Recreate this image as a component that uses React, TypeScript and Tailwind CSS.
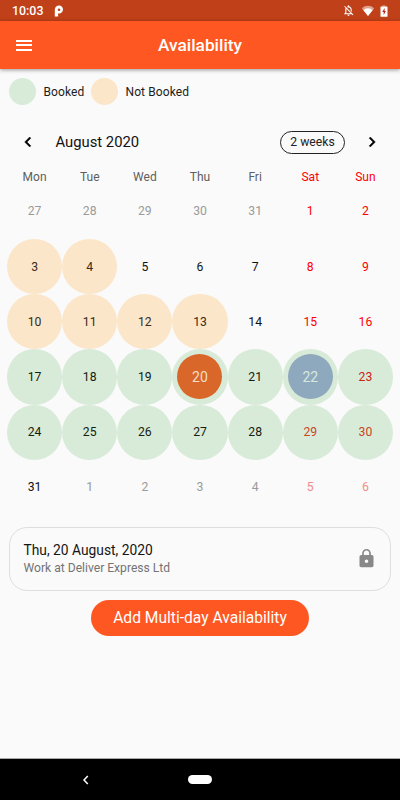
import React from "react";

type Kind = "booked" | "free" | "none";

const weekdays = ["Mon", "Tue", "Wed", "Thu", "Fri", "Sat", "Sun"];

const weeks = [
  [27, 28, 29, 30, 31, 1, 2],
  [3, 4, 5, 6, 7, 8, 9],
  [10, 11, 12, 13, 14, 15, 16],
  [17, 18, 19, 20, 21, 22, 23],
  [24, 25, 26, 27, 28, 29, 30],
  [31, 1, 2, 3, 4, 5, 6],
];

function isOutside(week: number, day: number) {
  return (week === 0 && day > 20) || (week === 5 && day < 10);
}

function getKind(week: number, col: number): Kind {
  if (week === 3 || week === 4) return "booked";
  if ((week === 1 && col < 2) || (week === 2 && col < 4)) return "free";
  return "none";
}

function getColor(week: number, col: number, day: number) {
  const weekend = col > 4;
  if (isOutside(week, day)) return weekend ? "text-[#f28b8b]" : "text-[#9a9a9a]";
  if (weekend) {
    if (week === 4) return "text-[#cb4526]";
    if (week === 3) return "text-[#d0210f]";
    return "text-[#ff0000]";
  }
  const kind = getKind(week, col);
  if (kind === "booked") return "text-[#15210f]";
  if (kind === "free") return "text-[#382b1a]";
  return "text-[#111111]";
}

function StatusBar() {
  return (
    <div className="flex h-[21px] items-center bg-[#bf4019] pl-[12px] pr-[12px] text-white">
      <span className="pt-[1px] text-[12.4px] font-medium leading-[20px]">10:03</span>
      <svg className="ml-[11px] h-[12px] w-[10px]" viewBox="0 0 10 12">
        <path fillRule="evenodd" fill="#fff" d="M.8 11.4V4.8C.8 2.2 2.6.6 5 .6s4 1.7 4 4-1.7 4-4 4H4.1v2.8zM5 3.4a1.3 1.3 0 1 0 0 2.6 1.3 1.3 0 0 0 0-2.6z" />
      </svg>
      <svg className="ml-auto h-[13px] w-[13px]" viewBox="0 0 24 24" fill="#fff">
        <path d="M20 18.69 7.84 6.14 5.27 3.49 4 4.76l2.8 2.8v.01c-.52.99-.8 2.16-.8 3.42v5l-2 2v1h13.73l2 2L21 19.72l-1-1.03zM8 17v-6c0-.7.1-1.35.3-1.93L15.9 17H8zm4 5c1.11 0 2-.89 2-2h-4c0 1.11.89 2 2 2zm6-7.32V11c0-3.08-1.64-5.64-4.5-6.32V4c0-.83-.67-1.5-1.5-1.5s-1.5.67-1.5 1.5v.68c-.44.1-.85.25-1.22.43l1.5 1.5C10.8 6.5 11.4 6.5 12 6.5c2.49 0 4 2.02 4 4.5v1.68l2 2z" />
      </svg>
      <svg className="ml-[6px] h-[12px] w-[14px]" viewBox="0 0 14 12">
        <path d="M.8 3.2a9.4 9.4 0 0 1 12.4 0L7 11z" fill="#dfa08c" />
        <path d="M2.3 5.1a7 7 0 0 1 9.4 0L7 11z" fill="#fff" />
      </svg>
      <svg className="ml-[5px] h-[12px] w-[8px]" viewBox="0 0 8 12">
        <path d="M2.3.4h3.2v1.2H2.3z" fill="#dfa08c" />
        <rect x=".5" y="1.4" width="7" height="10.4" rx=".6" fill="#fff" />
        <path d="M4.6 3 2.3 7h1.4v3l2.2-4H4.6z" fill="#bf2019" />
      </svg>
    </div>
  );
}

function Chevron({ right }: { right?: boolean }) {
  return (
    <svg className="h-[20px] w-[20px]" viewBox="0 0 24 24" fill="#000" stroke="#000" strokeWidth=".5">
      {right ? (
        <path d="M10 6 8.59 7.41 13.17 12l-4.58 4.59L10 18l6-6z" />
      ) : (
        <path d="M15.41 7.41 14 6l-6 6 6 6 1.41-1.41L10.83 12z" />
      )}
    </svg>
  );
}

function Day({ week, col, day }: { week: number; col: number; day: number }) {
  const kind = getKind(week, col);
  const bg = kind === "booked" ? "bg-[#d8ebd9]" : kind === "free" ? "bg-[#fce6c9]" : "";
  const selected = week === 3 && col === 3;
  const today = week === 3 && col === 5;

  return (
    <div className={`flex aspect-square items-center justify-center rounded-full text-[12.2px] ${bg} ${getColor(week, col, day)}`}>
      {selected || today ? (
        <span className={`flex h-[45px] w-[45px] items-center justify-center rounded-full pt-[1px] text-[14px] ${selected ? "bg-[#d9672a] text-[#f2dfc8]" : "bg-[#8ea8be] text-[#d7e9dd]"}`}>
          {day}
        </span>
      ) : (
        day
      )}
    </div>
  );
}

function App() {
  return (
    <div className="flex h-[800px] w-[400px] flex-col overflow-hidden bg-[#fafafa] font-['Roboto',sans-serif]">
      <StatusBar />
      <header className="flex h-[48px] shrink-0 items-center bg-[#ff5722] px-[16px] text-white shadow-[0_1px_4px_rgba(0,0,0,0.4)]">
        <div className="flex w-[40px] flex-col gap-[2.5px]">
          <span className="h-[2px] w-[16px] bg-white" />
          <span className="h-[2px] w-[16px] bg-white" />
          <span className="h-[2px] w-[16px] bg-white" />
        </div>
        <h1 className="flex-1 pr-[40px] pt-[1px] text-center text-[17.3px] font-medium">Availability</h1>
      </header>

      <div className="flex h-[45px] shrink-0 items-center pl-[9px] text-[12px] text-[#1c1c1c]">
        <span className="h-[27px] w-[27px] rounded-full bg-[#d8ebd9]" />
        <span className="ml-[7.5px] w-[47.5px] pt-[1px] tracking-[0.1px]">Booked</span>
        <span className="h-[27px] w-[27px] rounded-full bg-[#fce6c9]" />
        <span className="ml-[7.5px] pt-[1px] tracking-[0.1px]">Not Booked</span>
      </div>

      <div className="flex h-[56px] shrink-0 items-center px-[18px]">
        <Chevron />
        <span className="ml-[17.5px] text-[14.8px] text-[#111111]">August 2020</span>
        <button className="ml-auto mr-[17px] h-[23px] w-[65px] rounded-full border border-[#222222] pt-[1px] text-[12.2px] leading-none text-[#222222]">
          2 weeks
        </button>
        <Chevron right />
      </div>

      <div className="grid h-[14px] shrink-0 grid-cols-7 px-[7px] text-center text-[12px] leading-[15px]">
        {weekdays.map((name, i) => (
          <span key={name} className={i > 4 ? "text-[#ff0000]" : "text-[#5e5e5e]"}>
            {name}
          </span>
        ))}
      </div>
      <div className="grid shrink-0 grid-cols-7 px-[7px]">
        {weeks.map((week, w) =>
          week.map((day, c) => <Day key={`${w}-${c}`} week={w} col={c} day={day} />)
        )}
      </div>

      <div className="mx-[9px] mt-[12px] flex h-[64px] shrink-0 items-center justify-between rounded-[18px] border border-[#dedede] pl-[13.5px] pr-[13px]">
        <div>
          <p className="pt-[1px] text-[13.8px] leading-[18px] text-[#151515]">Thu, 20 August, 2020</p>
          <p className="text-[12.1px] leading-[18px] text-[#747474]">Work at Deliver Express Ltd</p>
        </div>
        <svg className="h-[21px] w-[21px]" viewBox="0 0 24 24" fill="#888888">
          <path d="M18 8h-1V6c0-2.76-2.24-5-5-5S7 3.24 7 6v2H6c-1.1 0-2 .9-2 2v10c0 1.1.9 2 2 2h12c1.1 0 2-.9 2-2V10c0-1.1-.9-2-2-2zm-6 9c-1.1 0-2-.9-2-2s.9-2 2-2 2 .9 2 2-.9 2-2 2zm3.1-9H8.9V6c0-1.71 1.39-3.1 3.1-3.1 1.71 0 3.1 1.39 3.1 3.1v2z" />
        </svg>
      </div>

      <button className="mt-[9px] h-[36px] w-[218px] shrink-0 self-center rounded-[18px] bg-[#ff5722] pt-[2px] text-[15.6px] text-white">
        Add Multi-day Availability
      </button>

      <nav className="mt-auto flex h-[42px] shrink-0 items-center border-t border-[#a8a8a8] bg-black pl-[82px]">
        <svg className="h-[10px] w-[7px]" viewBox="0 0 7 10">
          <path d="M5.8 1 2 5l3.8 4" fill="none" stroke="#fff" strokeWidth="1.5" />
        </svg>
        <span className="ml-[99px] h-[9px] w-[24px] rounded-full bg-white" />
      </nav>
    </div>
  );
}

export default App;
